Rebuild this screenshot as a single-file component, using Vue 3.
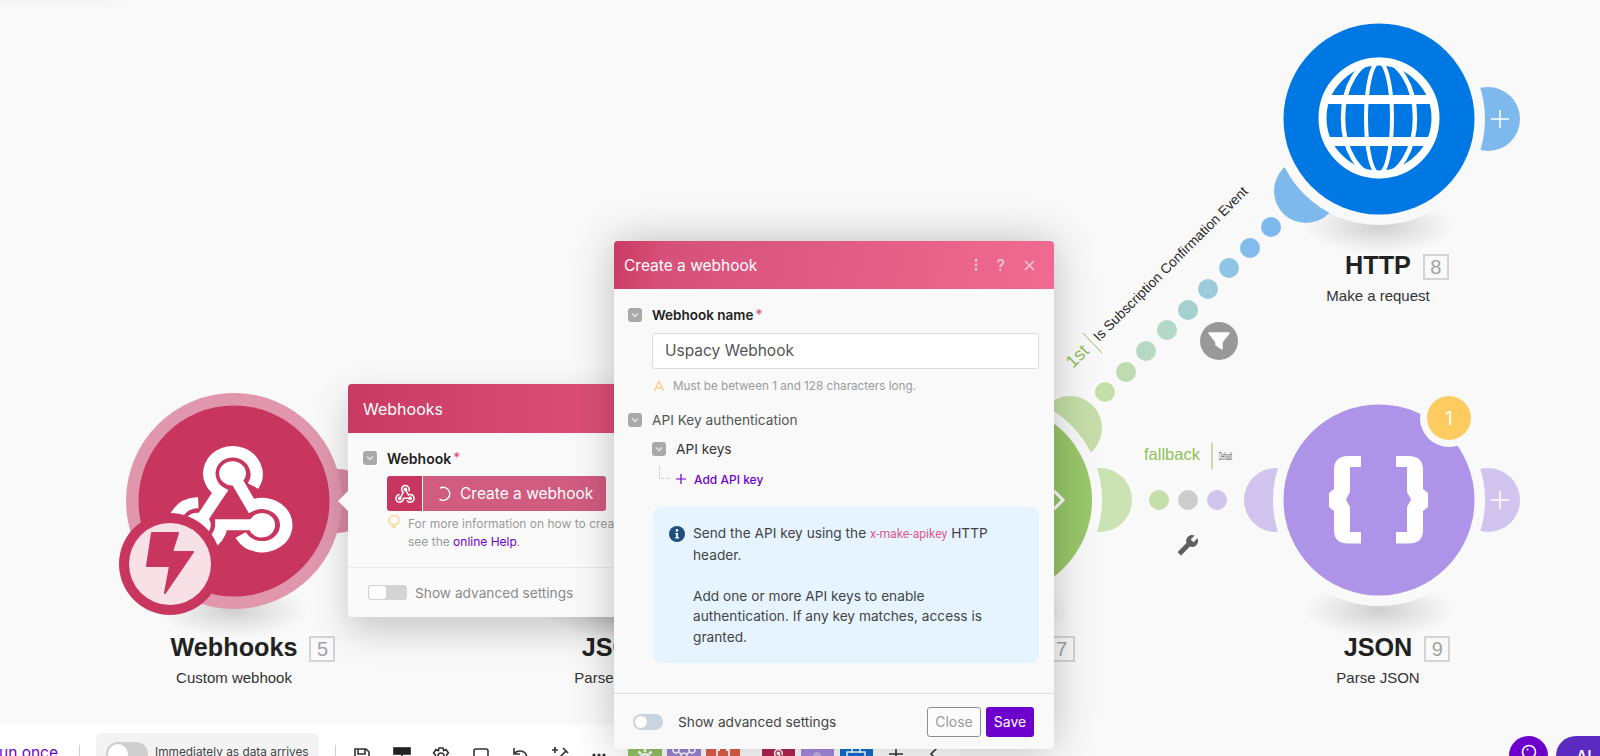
<script setup>
const dots = [
  [1105, 392, '#c5dfa8'], [1126, 372, '#bfdcb0'], [1146, 351, '#b7d9c4'], [1167, 330, '#b2d8c6'],
  [1188, 310, '#a4d0cf'], [1208, 289, '#9ecbdc'], [1229, 268, '#90c4e6'], [1250, 248, '#82bced'], [1271, 227, '#7eb9ee']
]
const labels = [
  { name: 'Webhooks', num: 5, sub: 'Custom webhook', x: 234, y: 632 },
  { name: 'JSON', num: 6, sub: 'Parse JSON', x: 616, y: 632 },
  { name: 'Router', num: 7, sub: '', x: 996, y: 632 },
  { name: 'HTTP', num: 8, sub: 'Make a request', x: 1378, y: 250 },
  { name: 'JSON', num: 9, sub: 'Parse JSON', x: 1378, y: 632 }
]
const shadows = [[233, 610], [616, 610], [996, 610], [1379, 226], [1379, 610]]
const webhookPath = 'M10.46,19C9,21.07 6.15,21.59 4.09,20.15C2.04,18.71 1.56,15.84 3,13.75C3.87,12.5 5.21,11.83 6.58,11.77L6.63,13.2C5.72,13.27 4.84,13.74 4.27,14.56C3.27,16 3.58,17.94 4.95,18.91C6.33,19.87 8.26,19.5 9.26,18.07C9.57,17.62 9.75,17.13 9.82,16.63V15.62L15.4,15.58L15.47,15.47C16,14.55 17.15,14.23 18.05,14.75C18.95,15.27 19.26,16.43 18.73,17.35C18.2,18.26 17.04,18.58 16.14,18.06C15.73,17.83 15.43,17.46 15.28,17.04L11.24,17.06C11.13,17.73 10.86,18.39 10.46,19M17.74,11.86C20.27,12.17 22.07,14.44 21.76,16.93C21.45,19.43 19.15,21.2 16.62,20.89C15.13,20.71 13.9,19.86 13.19,18.68L14.43,17.96C14.92,18.73 15.75,19.29 16.75,19.41C18.5,19.62 20.05,18.43 20.26,16.76C20.47,15.09 19.23,13.56 17.5,13.35C16.96,13.29 16.44,13.36 15.97,13.53L15.12,13.97L12.54,9.2H12.32C11.26,9.16 10.44,8.29 10.47,7.25C10.5,6.21 11.4,5.4 12.45,5.44C13.5,5.5 14.33,6.37 14.3,7.41C14.28,7.85 14.11,8.25 13.84,8.56L15.74,12.08C16.36,11.85 17.04,11.77 17.74,11.86M8.25,9.14C7.25,6.79 8.31,4.1 10.62,3.12C12.94,2.14 15.62,3.25 16.62,5.6C17.21,6.97 17.09,8.47 16.42,9.67L15.18,8.95C15.6,8.14 15.67,7.15 15.27,6.22C14.59,4.62 12.78,3.85 11.23,4.5C9.67,5.16 8.97,7 9.65,8.6C9.93,9.26 10.4,9.77 10.97,10.11L11.36,10.32L8.29,15.31C8.32,15.36 8.36,15.42 8.39,15.5C8.88,16.41 8.54,17.56 7.62,18.05C6.71,18.54 5.56,18.18 5.06,17.24C4.57,16.31 4.91,15.16 5.83,14.67C6.22,14.46 6.65,14.41 7.06,14.5L9.37,10.73C8.9,10.3 8.5,9.76 8.25,9.14Z'
const bracePath = 'M1361 456 V467 H1350 V492 L1346 499.5 L1350 507 V532 H1361 V543.5 H1348 Q1334 543.5 1334 530 V511 L1329 507 V493 L1334 489 V470 Q1334 456 1348 456 Z'
const blocks = [
  { c: '#93c465', stroke: 'M12 8 a4 4 0 1 0 .01 0 M12 2 V6 M12 18 V22 M3 12 H7 M17 12 H21 M5.5 5.5 L8 8 M18.5 5.5 L16 8', w: 2.6 },
  { c: '#9b85d6', stroke: 'M12 7 a3 3 0 1 0 .01 0 M4 1 a3 3 0 1 0 .01 0 M20 1 a3 3 0 1 0 .01 0 M6 5 L10 9 M18 5 L14 9', w: 1.6 },
  { c: '#e0604a', stroke: 'M9 4 H6 V20 H9 M15 4 H18 V20 H15', w: 1.8 }
]
const blocks2 = [
  { c: '#b5264f', fill: webhookPath },
  { c: '#a78be0', fill: 'M8 24 V10 A4 4 0 0 1 16 10 V24 Z', faint: true },
  { c: '#0f6fcf', stroke: 'M3 6 H21 V22 H3 Z M3 11 H21 M8 3 V7 M16 3 V7', w: 1.5 }
]
</script>

<template>
  <div class="canvas">
    <i class="top-band"></i>
    <svg class="diagram" width="1600" height="756" viewBox="0 0 1600 756">
      <defs>
        <radialGradient id="shade">
          <stop offset="0" stop-color="#000" stop-opacity=".17" />
          <stop offset=".55" stop-color="#000" stop-opacity=".07" />
          <stop offset="1" stop-color="#000" stop-opacity="0" />
        </radialGradient>
      </defs>

      <ellipse v-for="(s, i) in shadows" :key="'s' + i" :cx="s[0]" :cy="s[1]" rx="76" ry="28" fill="url(#shade)" />

      <!-- dots -->
      <circle v-for="(d, i) in dots" :key="'d' + i" :cx="d[0]" :cy="d[1]" r="10" :fill="d[2]" />
      <circle cx="1159" cy="500" r="10" fill="#c5dfa8" />
      <circle cx="1188" cy="500" r="10" fill="#cccccc" />
      <circle cx="1217" cy="500" r="10" fill="#cfc5ee" />

      <!-- connector half discs -->
      <circle cx="1488" cy="119" r="32" fill="#7eb9ee" />
      <circle cx="1306" cy="191" r="32" fill="#7eb9ee" />
      <circle cx="1488" cy="500" r="32" fill="#d1c5f0" />
      <circle cx="1276" cy="500" r="32" fill="#d1c5f0" />
      <circle cx="1100" cy="500" r="32" fill="#cbe3b3" />
      <circle cx="1070" cy="428" r="32" fill="#c5dea8" />
      <circle cx="338" cy="501" r="32" fill="#d98aa3" />

      <!-- node gaps -->
      <circle cx="1379" cy="119" r="106" fill="#f9f9f9" />
      <circle cx="1379" cy="500" r="106" fill="#f9f9f9" />
      <circle cx="996" cy="500" r="106" fill="#f9f9f9" />

      <!-- green node -->
      <circle cx="996" cy="500" r="96" fill="#99c76a" />
      <path d="M1054 491 L1063 500 L1054 509" fill="none" stroke="#fff" stroke-width="3" />

      <!-- webhooks node -->
      <circle cx="234" cy="501" r="108" fill="#e097ad" />
      <circle cx="234" cy="501" r="95.5" fill="#c8365f" />
      <path :d="webhookPath" fill="#fff" stroke="#fff" stroke-width=".5" transform="translate(155.8 431.7) scale(6.2 5.7)" />
      <circle cx="170" cy="564" r="51" fill="#c8365f" />
      <circle cx="170" cy="564" r="41" fill="#fff" fill-opacity=".85" />
      <path d="M152 533 L178 533 L172 552 L193 552 L165 593 L170 566 L147 566 Z" fill="#c8365f" stroke="#c8365f" stroke-width="2" stroke-linejoin="round" />

      <!-- HTTP node -->
      <circle cx="1379" cy="119" r="95.5" fill="#0078e3" />
      <g fill="none" stroke="#fff">
        <circle cx="1379" cy="118" r="56.5" stroke-width="8" />
        <ellipse cx="1379" cy="118" rx="13" ry="56" stroke-width="4" />
        <ellipse cx="1379" cy="118" rx="36" ry="58" stroke-width="4.5" />
        <path d="M1328 99.5 H1430 M1328 141.5 H1430" stroke-width="9" />
      </g>
      <path d="M1500 110 V128 M1491 119 H1509" stroke="#fff" stroke-width="1.5" />

      <!-- JSON node -->
      <circle cx="1379" cy="500" r="95.5" fill="#ad94e8" />
      <path :d="bracePath" fill="#fff" />
      <path :d="bracePath" fill="#fff" transform="translate(2757 0) scale(-1 1)" />
      <circle cx="1449" cy="418" r="29" fill="#f9f9f9" />
      <circle cx="1449" cy="418" r="22" fill="#fdcb5f" />
      <text x="1449" y="424.5" text-anchor="middle" class="count">1</text>
      <path d="M1491 500 H1509 M1500 491 V509" stroke="#fff" stroke-width="1.5" />

      <!-- filter -->
      <circle cx="1219" cy="341" r="19" fill="#999" />
      <path d="M1209 333 H1229 L1222 342 V349 L1216 345 V342 Z" fill="#fff" stroke="#fff" stroke-width="1.5" stroke-linejoin="round" />

      <!-- rotated route label -->
      <text class="route-green" transform="translate(1073 369) rotate(-45)">1st</text>
      <path d="M1083 333 L1102 353" stroke="#8fc25a" stroke-width="1" />
      <text class="route-text" transform="translate(1099 342) rotate(-45)">Is Subscription Confirmation Event</text>

      <!-- fallback -->
      <text class="fallback" x="1144" y="460">fallback</text>
      <path d="M1212 443 V469" stroke="#8fc25a" stroke-width="1" />
      <text class="default" x="1219" y="460" textLength="13" lengthAdjust="spacingAndGlyphs">Default</text>
      <g transform="translate(1199 534) scale(-0.92 0.92)">
        <path d="M22.7,19L13.6,9.9C14.5,7.6 14,4.9 12.1,3C10.1,1 7.1,0.6 4.7,1.7L9,6L6,9L1.6,4.7C0.4,7.1 0.9,10.1 2.9,12.1C4.8,14 7.5,14.5 9.8,13.6L18.9,22.7C19.3,23.1 19.9,23.1 20.3,22.7L22.6,20.4C23.1,20 23.1,19.3 22.7,19Z" fill="#5f5f5f" />
      </g>
    </svg>

    <div v-for="l in labels" :key="l.num" class="node-label" :style="{ left: l.x - 150 + 'px', top: l.y + 'px' }">
      <div class="node-title">{{ l.name }}<span class="node-num">{{ l.num }}</span></div>
      <div class="node-sub">{{ l.sub }}</div>
    </div>

    <!-- toolbar -->
    <div class="toolbar">
      <div class="run">Run once</div>
      <span class="sep sep-a"></span>
      <div class="sched">
        <span class="sched-toggle"><span class="sched-knob"></span></span>
        <span class="sched-text">Immediately as data arrives</span>
      </div>
      <span class="sep sep-b"></span>
      <div class="tools">
        <svg width="20" height="20" viewBox="0 0 20 20" fill="none" stroke="#333" stroke-width="1.6"><path d="M3 3 H14 L17 6 V17 H3 Z M6 3 V8 H13 V3 M7 17 V12 H13 V17" /></svg>
        <svg width="20" height="20" viewBox="0 0 20 20" fill="none" stroke="#222" stroke-width="1.6"><rect x="2" y="2" width="16" height="6" fill="#222" /><path d="M10 8 V16 M3 12 H17 M3 16 H17" /></svg>
        <svg width="20" height="20" viewBox="0 0 20 20" fill="none" stroke="#333" stroke-width="1.6"><circle cx="10" cy="10" r="3" /><path d="M8 2 H12 L12.6 4.6 L15 3.6 L17.4 7 L15.6 9 V11 L17.4 13 L15 16.4 L12.6 15.4 L12 18 H8 L7.4 15.4 L5 16.4 L2.6 13 L4.4 11 V9 L2.6 7 L5 3.6 L7.4 4.6 Z" /></svg>
        <svg width="20" height="20" viewBox="0 0 20 20" fill="none" stroke="#333" stroke-width="1.6"><rect x="3" y="3" width="14" height="14" rx="2" /></svg>
        <svg width="20" height="20" viewBox="0 0 20 20" fill="none" stroke="#333" stroke-width="1.6"><path d="M4 2 V8 H10 M4 8 C7 3.5 15 4 16.5 10 C17 13 15.5 16 13 17" /></svg>
        <svg width="20" height="20" viewBox="0 0 20 20" fill="none" stroke="#333" stroke-width="1.7"><path d="M3 18 L16 5 M13 2 L18 7 M5 1 V7 M2 4 H8" /></svg>
        <svg width="20" height="20" viewBox="0 0 20 20" fill="#333"><circle cx="5" cy="9" r="1.6" /><circle cx="10" cy="9" r="1.6" /><circle cx="15" cy="9" r="1.6" /></svg>
      </div>
      <div class="blocks">
        <span v-for="b in blocks" :key="b.c" class="block" :style="{ background: b.c }">
          <svg width="24" height="24" viewBox="0 0 24 24" fill="none" stroke="#fff" :stroke-width="b.w"><path :d="b.stroke" /></svg>
        </span>
      </div>
      <div class="blocks blocks-b">
        <span v-for="b in blocks2" :key="b.c" class="block" :style="{ background: b.c }">
          <svg width="24" height="24" viewBox="0 0 24 24" :fill="b.fill ? '#fff' : 'none'" :fill-opacity="b.faint ? .35 : 1" :stroke="b.stroke ? '#fff' : 'none'" :stroke-width="b.w"><path :d="b.fill || b.stroke" /></svg>
        </span>
      </div>
      <svg class="tool-plus" width="16" height="16" viewBox="0 0 16 16" stroke="#333" stroke-width="1.6"><path d="M8 1 V15 M1 8 H15" /></svg>
      <svg class="tool-back" width="12" height="16" viewBox="0 0 12 16" fill="none" stroke="#333" stroke-width="1.6"><path d="M9 2 L3 8 L9 14" /></svg>
    </div>

    <div class="help-btn">
      <svg width="18" height="18" viewBox="0 0 18 18" fill="none" stroke="#fff" stroke-width="1.6"><circle cx="9" cy="9" r="6.5" /><circle cx="7.5" cy="6.5" r="1" fill="#fff" stroke="none" /></svg>
    </div>
    <div class="ai-btn">AI</div>

    <!-- webhooks panel -->
    <section class="panel">
      <i class="panel-arrow"></i>
      <header class="panel-head">Webhooks</header>
      <div class="panel-body">
        <div class="row">
          <span class="check"><svg width="10" height="10" viewBox="0 0 10 10" fill="none" stroke="#e4e4e4" stroke-width="1.5"><path d="M2 3.5 L5 6.5 L8 3.5" /></svg></span>
          <span class="strong">Webhook</span><span class="star">*</span>
        </div>
        <div class="create">
          <span class="create-icon">
            <svg width="24" height="24" viewBox="0 0 24 24"><path :d="webhookPath" fill="#fff" /></svg>
          </span>
          <span class="create-main">
            <svg width="16" height="16" viewBox="0 0 16 16" fill="none" stroke="#fff" stroke-width="1.5"><path d="M4 2.2 A6.5 6.5 0 1 1 3.5 13.2" /></svg>
            Create a webhook
          </span>
        </div>
        <div class="tip">
          <svg class="bulb" width="12" height="14" viewBox="0 0 12 14" fill="none" stroke="#fbd38d" stroke-width="1.4"><path d="M3.5 9.5 C1 7.5 .8 5.5 1.2 4 A5 5 0 0 1 10.8 4 C11.2 5.5 11 7.5 8.5 9.5 Z M4 12 H8" /></svg>
          <p>For more information on how to create a webhook,<br />see the <a class="link">online Help</a>.</p>
        </div>
      </div>
      <footer class="panel-foot">
        <span class="square-toggle"><span class="square-knob"></span></span>
        <span class="muted">Show advanced settings</span>
      </footer>
    </section>

    <!-- dialog -->
    <section class="dialog">
      <header class="dialog-head">
        <span class="dialog-title">Create a webhook</span>
        <span class="head-actions">
          <svg width="4" height="14" viewBox="0 0 4 14" fill="#f4c2d2"><circle cx="2" cy="2.5" r="1.4" /><circle cx="2" cy="7" r="1.4" /><circle cx="2" cy="11.5" r="1.4" /></svg>
          <span class="q">?</span>
          <svg width="11" height="11" viewBox="0 0 11 11" stroke="#f4c2d2" stroke-width="1.7"><path d="M1 1 L10 10 M10 1 L1 10" /></svg>
        </span>
      </header>
      <div class="dialog-body">
        <div class="row">
          <span class="check"><svg width="10" height="10" viewBox="0 0 10 10" fill="none" stroke="#e4e4e4" stroke-width="1.5"><path d="M2 3.5 L5 6.5 L8 3.5" /></svg></span>
          <span class="strong narrow">Webhook name</span><span class="star">*</span>
        </div>
        <div class="input">Uspacy Webhook</div>
        <div class="hint">
          <svg width="12" height="12" viewBox="0 0 12 12" fill="none" stroke="#fbd38d" stroke-width="1.6"><path d="M1.5 11 L6 1.5 L10.5 11 M3.5 8 H8.5" /></svg>
          Must be between 1 and 128 characters long.
        </div>
        <div class="row api-row">
          <span class="check"><svg width="10" height="10" viewBox="0 0 10 10" fill="none" stroke="#e4e4e4" stroke-width="1.5"><path d="M2 3.5 L5 6.5 L8 3.5" /></svg></span>
          <span class="plain">API Key authentication</span>
        </div>
        <div class="row keys-row">
          <span class="check"><svg width="10" height="10" viewBox="0 0 10 10" fill="none" stroke="#e4e4e4" stroke-width="1.5"><path d="M2 3.5 L5 6.5 L8 3.5" /></svg></span>
          <span class="plain dark">API keys</span>
        </div>
        <div class="add-row">
          <i class="tree"></i>
          <svg width="10" height="10" viewBox="0 0 10 10" stroke="#6d00cc" stroke-width="1.2"><path d="M5 0 V10 M0 5 H10" /></svg>
          <span class="link add">Add API key</span>
        </div>
        <div class="info">
          <svg class="info-icon" width="16" height="16" viewBox="0 0 16 16"><circle cx="8" cy="8" r="8" fill="#1f4f7f" /><circle cx="8" cy="4.4" r="1.3" fill="#fff" /><path d="M6.2 6.9 H9 V11 H10 V12.4 H6.2 V11 H7.2 V8.3 H6.2 Z" fill="#fff" /></svg>
          <div class="info-text">
            <p>Send the API key using the <code>x-make-apikey</code> HTTP header.</p>
            <p class="gap">Add one or more API keys to enable authentication. If any key matches, access is granted.</p>
          </div>
        </div>
      </div>
      <footer class="dialog-foot">
        <span class="pill"><span class="pill-knob"></span></span>
        <span class="foot-label">Show advanced settings</span>
        <span class="btn btn-close">Close</span>
        <span class="btn btn-save">Save</span>
      </footer>
    </section>
  </div>
</template>

<style>
html, body { margin: 0; overflow: hidden; background: #f9f9f9; }
</style>

<style scoped>
.canvas { position: relative; width: 1600px; height: 756px; overflow: hidden; background: #f9f9f9; font-family: Inter, "Liberation Sans", sans-serif; color: #333; }
.top-band { position: absolute; left: 0; top: 0; width: 135px; height: 6px; background: linear-gradient(90deg, #f5f5f5 70%, #f9f9f9); }
.diagram { position: absolute; left: 0; top: 0; }
.count { font: 18px Inter, sans-serif; fill: #fff; }
.route-green { font: 18px "Liberation Sans", sans-serif; fill: #8fc25a; }
.route-text { font: 13.8px "Liberation Sans", sans-serif; fill: #2a2a2a; }
.fallback { font: 16.5px "Liberation Sans", sans-serif; fill: #8fc25a; }
.default { font: 11px "Liberation Sans", sans-serif; fill: #555; }

.node-label { position: absolute; width: 300px; text-align: center; font-family: "Liberation Sans", sans-serif; }
.node-title { position: relative; display: inline-block; font-size: 25.2px; line-height: 30px; font-weight: 700; color: #222; }
.node-num { position: absolute; left: calc(100% + 12px); top: 4px; box-sizing: border-box; width: 26px; height: 26px; border: 2px solid #d4d4d4; color: #a3a3a3; font-size: 20px; font-weight: 400; line-height: 22px; text-align: center; }
.node-sub { margin-top: 6px; font-size: 15px; line-height: 20px; color: #333; }

.toolbar { position: absolute; left: 0; top: 725px; width: 960px; height: 31px; background: #fff; border-radius: 0 16px 0 0; display: flex; align-items: flex-start; overflow: hidden; }
.run { margin: 18px 0 0 -11px; width: 69px; font-size: 15.5px; line-height: 20px; font-weight: 400; color: #6d00cc; white-space: nowrap; }
.sep { width: 1px; height: 12px; margin-top: 20px; background: #d0d0d0; flex: none; }
.sep-a { margin-left: 21px; }
.sched { margin: 8px 0 0 16px; width: 223px; height: 40px; flex: none; background: #f3f3f4; border-radius: 6px; display: flex; align-items: flex-start; }
.sched-toggle { margin: 9px 0 0 10px; width: 42px; height: 24px; border-radius: 12px; background: #cfcfcf; flex: none; }
.sched-knob { display: block; margin: 2px; width: 20px; height: 20px; border-radius: 50%; background: #fff; }
.sched-text { margin: 11px 0 0 7px; font-size: 11.85px; line-height: 16px; color: #444; white-space: nowrap; }
.sep-b { margin-left: 16px; }
.tools { margin: 21px 0 0 16px; display: flex; gap: 19.5px; flex: none; }
.blocks { margin: 17px 0 0 19px; display: flex; gap: 5.5px; flex: none; }
.blocks-b { margin-left: 22px; }
.block { display: flex; justify-content: center; width: 33.5px; height: 30px; padding-top: 4px; box-sizing: border-box; }
.tool-plus { margin: 21px 0 0 14.5px; flex: none; }
.tool-back { margin: 21px 0 0 24px; flex: none; }
.help-btn { position: absolute; left: 1509px; top: 736px; width: 39px; height: 39px; border-radius: 50%; background: #6d00cc; display: flex; justify-content: center; padding-top: 7px; box-sizing: border-box; }
.ai-btn { position: absolute; left: 1556px; top: 736px; width: 80px; height: 40px; border-radius: 20px; background: #5b2ac0; color: #fff; font-size: 16px; font-weight: 500; line-height: 24px; padding-left: 20px; box-sizing: border-box; padding-top: 8px; }

.panel { position: absolute; left: 348px; top: 384px; width: 320px; height: 233px; background: #fafafa; border-radius: 4px; box-shadow: 0 14px 36px rgba(0, 0, 0, .2); display: flex; flex-direction: column; }
.panel-arrow { position: absolute; left: -10px; top: 107px; width: 0; height: 0; border-style: solid; border-width: 10px 10px 10px 0; border-color: transparent #fafafa transparent transparent; }
.panel-head { height: 49px; padding-left: 15px; box-sizing: border-box; background: linear-gradient(90deg, #c93a63, #e0547f); color: #fff; border-radius: 4px 4px 0 0; font-size: 16px; line-height: 50px; }
.panel-body { padding: 15px 15px 0; flex: 1; }
.row { display: flex; align-items: center; height: 20px; }
.check { width: 14px; height: 14px; border-radius: 3px; background: #a9a9a9; display: flex; align-items: center; justify-content: center; flex: none; margin-right: 10px; }
.strong { font-size: 14px; font-weight: 600; color: #222; }
.narrow { font-size: 13.5px; }
.star { margin: -1px 0 0 2px; font-size: 14px; color: #e0477a; }
.create { margin: 8px 0 0 24px; width: 219px; height: 35px; display: flex; border-radius: 3px; overflow: hidden; gap: 1px; }
.create-icon { width: 35px; background: #c8365f; display: flex; align-items: center; justify-content: center; flex: none; }
.create-main { flex: 1; background: #d05c80; color: #fff; font-size: 15.5px; display: flex; align-items: center; gap: 8px; padding-left: 13px; white-space: nowrap; }
.tip { position: relative; margin: 4px 0 0 45px; }
.bulb { position: absolute; left: -20px; top: 0; }
.tip p { margin: 0; font-size: 12px; line-height: 18px; color: #9a9a9a; white-space: nowrap; }
.link { color: #6d00cc; }
.panel-foot { height: 50px; border-top: 1px solid #ececec; box-sizing: border-box; display: flex; align-items: center; padding-left: 20px; gap: 8px; margin-top: -1px; }
.square-toggle { width: 39px; height: 15px; background: #d4d4d4; border-radius: 3px; display: block; }
.square-knob { display: block; margin: 1px; width: 17px; height: 13px; background: #fff; border-radius: 3px; }
.muted { font-size: 13.7px; color: #8a8a8a; }

.dialog { position: absolute; left: 614px; top: 241px; width: 440px; height: 508px; background: #f9f9f9; border-radius: 4px; box-shadow: 0 0 44px rgba(0, 0, 0, .24); display: flex; flex-direction: column; }
.dialog-head { height: 48px; flex: none; display: flex; align-items: center; justify-content: space-between; padding: 0 19px 0 10px; color: #fff; border-radius: 4px 4px 0 0; background: linear-gradient(100deg, #c93a63 0, #d6517a 12%, #f06a92 100%); }
.dialog-title { font-size: 15.5px; }
.head-actions { display: flex; align-items: center; gap: 19px; }
.q { font-size: 16px; color: #f4c2d2; font-weight: 500; }
.dialog-body { padding: 16px 15px 0 14px; flex: 1; }
.input { margin: 8px 0 0 24px; height: 36px; box-sizing: border-box; background: #fff; border: 1px solid #dcdcdc; border-radius: 3px; padding-left: 12px; font-size: 15.5px; line-height: 34px; color: #555; }
.hint { margin: 9px 0 0 25px; display: flex; align-items: center; gap: 8px; font-size: 11.7px; line-height: 16px; color: #9c9c9c; }
.api-row { margin-top: 16px; }
.keys-row { margin: 9px 0 0 24px; }
.plain { font-size: 13.7px; color: #555; }
.dark { color: #333; }
.add-row { position: relative; margin: 10px 0 0 48px; height: 20px; display: flex; align-items: center; gap: 8px; }
.tree { position: absolute; left: -17px; top: -3px; width: 10px; height: 12px; border-left: 1px dotted #bbb; border-bottom: 1px dotted #bbb; }
.add { font-size: 12px; font-weight: 500; }
.info { margin: 18px 0 0 25px; height: 156px; box-sizing: border-box; padding: 16px 24px 0 16px; background: #e6f4ff; border-radius: 8px; display: flex; gap: 8px; }
.info-icon { margin-top: 3px; flex: none; }
.info-text { font-size: 13.7px; line-height: 20.5px; color: #444; }
.info-text p { margin: 0; }
.gap { margin-top: 20.5px !important; }
code { font-family: "Roboto", sans-serif; font-size: 12.2px; color: #e05a90; }
.dialog-foot { height: 56px; flex: none; box-sizing: border-box; border-top: 1px solid #dedede; display: flex; align-items: center; padding: 0 20px 0 19px; }
.pill { width: 30px; height: 16px; border-radius: 8px; background: #c8d4e0; flex: none; }
.pill-knob { display: block; margin: 2px; width: 12px; height: 12px; border-radius: 50%; background: #fff; }
.foot-label { margin-left: 15px; flex: 1; font-size: 13.7px; color: #444; }
.btn { height: 30px; box-sizing: border-box; display: flex; align-items: center; justify-content: center; border-radius: 3px; font-size: 14px; }
.btn-close { width: 54px; border: 1px solid #8f8f8f; color: #9a9a9a; background: #fcfcfc; }
.btn-save { margin-left: 5px; width: 48px; background: #6d00cc; color: #fff; font-weight: 400; }
</style>
